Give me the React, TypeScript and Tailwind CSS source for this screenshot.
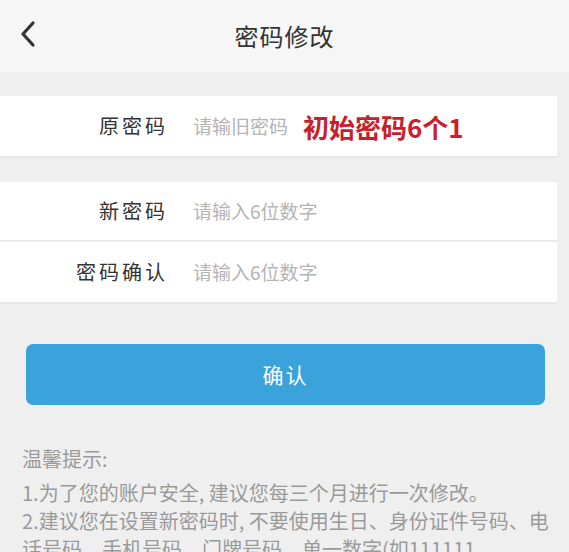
const FONT = '"Noto Sans CJK SC", "Noto Sans", sans-serif';

const BackIcon = () => (
  <svg width="20" height="28" viewBox="0 0 20 28" fill="none">
    <polyline
      points="15,3 5,14 15,25"
      stroke="#333333"
      strokeWidth="3.2"
      strokeLinecap="round"
      strokeLinejoin="round"
    />
  </svg>
);

type RowProps = {
  label: string;
  placeholder: string;
  extra?: string;
  last?: boolean;
};

const FormRow = ({ label, placeholder, extra, last }: RowProps) => (
  <div className={`flex h-[60px] items-center ${last ? '' : 'border-b-2 border-[#ebebeb]'}`}>
    <div className="w-[168px] shrink-0 text-right text-[20px] tracking-[3px] text-[#333333]">{label}</div>
    <div className="ml-[25px] text-[19px] text-[#b4b4b4]">{placeholder}</div>
    {extra && (
      <div className="ml-[15px] text-[26px] font-bold text-[#c81e2e]">{extra}</div>
    )}
  </div>
);

const App = () => {
  return (
    <div className="h-[552px] w-full overflow-hidden bg-[#efefef]" style={{ fontFamily: FONT }}>
      <div className="relative flex h-[72px] items-center justify-center bg-[#f6f6f6]">
        <div className="absolute left-[18px] top-[20px]">
          <BackIcon />
        </div>
        <div className="text-[24px] tracking-[1px] text-[#333333]">密码修改</div>
      </div>

      <div className="mr-3 mt-[24px] border-b-2 border-[#e6e6e6] bg-white">
        <FormRow label="原密码" placeholder="请输旧密码" extra="初始密码6个1" last />
      </div>

      <div className="mr-3 mt-[24px] border-b-2 border-[#e6e6e6] bg-white">
        <FormRow label="新密码" placeholder="请输入6位数字" />
        <FormRow label="密码确认" placeholder="请输入6位数字" last />
      </div>

      <button className="mx-[26px] mt-[40px] flex h-[61px] w-[519px] items-center justify-center rounded-[7px] bg-[#3aa3db] text-[21px] tracking-[2px] text-white">
        确认
      </button>

      <div className="mt-[40px] pl-[22px] pr-[14px] text-[#9a9a9a]">
        <div className="mb-[6px] text-[20px] leading-[28px]">温馨提示:</div>
        <div className="text-[20px] leading-[28px]">
          <p>1.为了您的账户安全, 建议您每三个月进行一次修改。</p>
          <p>2.建议您在设置新密码时, 不要使用生日、身份证件号码、电话号码、手机号码、门牌号码、单一数字(如111111、888888)等。</p>
        </div>
      </div>
    </div>
  );
};

export default App;
